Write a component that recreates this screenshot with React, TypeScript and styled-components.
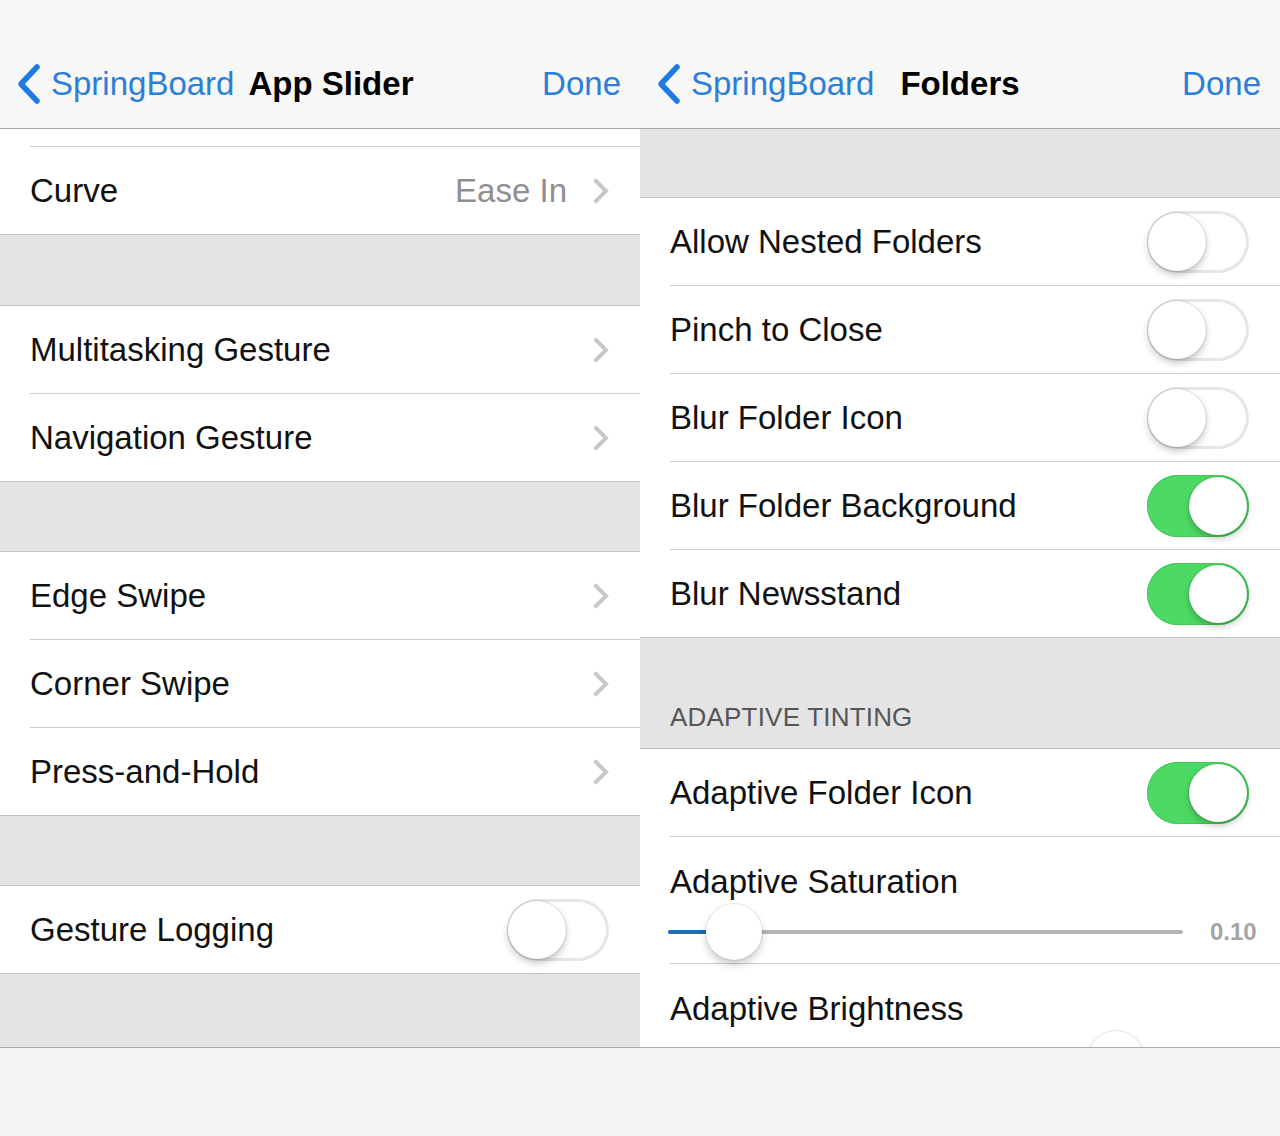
import React from "react";
import styled, { createGlobalStyle } from "styled-components";

const GlobalStyle = createGlobalStyle`
  html, body { margin: 0; padding: 0; background: #f4f4f4; }
  body { font-family: "Liberation Sans", Arial, sans-serif; -webkit-font-smoothing: antialiased; }
  * { box-sizing: border-box; }
`;

const Page = styled.div`
  display: flex;
  width: 1280px;
  height: 1136px;
  overflow: hidden;
`;

const Screen = styled.div`
  display: flex;
  flex-direction: column;
  width: 640px;
  height: 1136px;
`;

const NavBar = styled.header`
  height: 129px;
  padding-top: 40px;
  background: #f7f7f7;
  border-bottom: 1px solid #a9a9a9;
  display: grid;
  grid-template-columns: 1fr auto 1fr;
  align-items: center;
`;

const BackButton = styled.div`
  display: flex;
  align-items: center;
  gap: 9px;
  padding-left: 16px;
  color: #2c7fd4;
  font-size: 33px;
  height: 88px;
`;

const Title = styled.div`
  font-size: 33px;
  font-weight: 700;
  color: #000;
  padding: 0 14px;
`;

const DoneButton = styled.div`
  justify-self: end;
  padding-right: 19px;
  color: #2c7fd4;
  font-size: 33px;
`;

const Content = styled.main`
  flex: 1;
  overflow: hidden;
  background: #e4e4e4;
  display: flex;
  flex-direction: column;
`;

const Gap = styled.div<{ $h: number }>`
  height: ${(p) => p.$h}px;
  flex-shrink: 0;
`;

const HeaderGap = styled.div`
  height: 110px;
  flex-shrink: 0;
  display: flex;
  align-items: flex-end;
  padding: 0 30px 15px;
  font-size: 26px;
  color: #565656;
  letter-spacing: 0.2px;
`;

const Group = styled.section<{ $noTop?: boolean }>`
  background: #fff;
  border-top: ${(p) => (p.$noTop ? "none" : "1px solid #c4c4c4")};
  border-bottom: 1px solid #c4c4c4;
  flex-shrink: 0;
`;

const Row = styled.div<{ $h?: number }>`
  height: ${(p) => p.$h ?? 87}px;
  margin-left: 30px;
  padding-right: 31px;
  display: flex;
  align-items: center;
  box-sizing: content-box;
  & + & {
    border-top: 1px solid #cbcbcb;
  }
`;

const StackRow = styled(Row)`
  flex-direction: column;
  align-items: stretch;
  justify-content: flex-start;
  padding-right: 24px;
`;

const Label = styled.span`
  flex: 1;
  font-size: 33px;
  color: #111;
  white-space: nowrap;
`;

const StackLabel = styled(Label)`
  flex: none;
  margin-top: 26px;
  line-height: 38px;
`;

const Value = styled.span`
  font-size: 33px;
  color: #8e8e93;
  margin-right: 26px;
`;

const Chevron = styled.svg`
  width: 16px;
  height: 26px;
  flex-shrink: 0;
`;

const SwitchTrack = styled.div<{ $on: boolean }>`
  position: relative;
  width: 102px;
  height: 62px;
  border-radius: 31px;
  flex-shrink: 0;
  background: ${(p) => (p.$on ? "#4cd964" : "#fff")};
  box-shadow: ${(p) =>
    p.$on ? "inset 0 0 0 1px #45c85a" : "inset 0 0 0 3px #e6e6e6"};
`;

const SwitchKnob = styled.div<{ $on: boolean }>`
  position: absolute;
  top: 2px;
  ${(p) => (p.$on ? "right: 2px;" : "left: 1px;")}
  width: 58px;
  height: 58px;
  border-radius: 50%;
  background: #fff;
  box-shadow: 0 0 0 1px rgba(0, 0, 0, 0.1), 0 4px 7px rgba(0, 0, 0, 0.22);
`;

const SliderLine = styled.div`
  display: flex;
  align-items: center;
  height: 56px;
  margin-top: 3px;
  margin-left: -2px;
  gap: 27px;
`;

const SliderTrack = styled.div`
  position: relative;
  flex: 1;
  height: 4px;
  border-radius: 2px;
  background: #b4b4b4;
`;

const SliderFill = styled.div`
  height: 100%;
  border-radius: 2px;
  background: #1f6db5;
`;

const SliderThumb = styled.div`
  position: absolute;
  top: -26px;
  width: 56px;
  height: 56px;
  margin-left: -28px;
  border-radius: 50%;
  background: #fff;
  box-shadow: 0 0 0 1px rgba(0, 0, 0, 0.08), 0 5px 8px rgba(0, 0, 0, 0.2);
`;

const SliderValue = styled.span`
  font-size: 24px;
  font-weight: 700;
  color: #a5a5a5;
  width: 46px;
  text-align: right;
`;

const BottomBar = styled.footer`
  height: 89px;
  flex-shrink: 0;
  background: #f4f4f4;
  border-top: 1px solid #ababab;
`;

const BackChevron = () => (
  <svg width="26" height="42" viewBox="0 0 26 42">
    <polyline
      points="21,4 5,21 21,38"
      fill="none"
      stroke="#1f7ae2"
      strokeWidth="5.5"
      strokeLinecap="round"
      strokeLinejoin="round"
    />
  </svg>
);

const Disclosure = () => (
  <Chevron viewBox="0 0 16 26">
    <polyline
      points="3,3 13,13 3,23"
      fill="none"
      stroke="#c7c7cc"
      strokeWidth="4"
      strokeLinecap="square"
    />
  </Chevron>
);

const Switch = ({ on }: { on: boolean }) => (
  <SwitchTrack $on={on}>
    <SwitchKnob $on={on} />
  </SwitchTrack>
);

const Slider = ({ pos, value }: { pos: number; value?: string }) => (
  <SliderLine>
    <SliderTrack>
      <SliderFill style={{ width: `${pos}px` }} />
      <SliderThumb style={{ left: `${pos}px` }} />
    </SliderTrack>
    <SliderValue>{value ?? ""}</SliderValue>
  </SliderLine>
);

const Nav = ({ title }: { title: string }) => (
  <NavBar>
    <BackButton>
      <BackChevron />
      <span>SpringBoard</span>
    </BackButton>
    <Title>{title}</Title>
    <DoneButton>Done</DoneButton>
  </NavBar>
);

const LinkRow = ({ label, value }: { label: string; value?: string }) => (
  <Row>
    <Label>{label}</Label>
    {value && <Value>{value}</Value>}
    <Disclosure />
  </Row>
);

const SwitchRow = ({ label, on }: { label: string; on: boolean }) => (
  <Row>
    <Label>{label}</Label>
    <Switch on={on} />
  </Row>
);

export default function App() {
  return (
    <>
      <GlobalStyle />
      <Page>
        <Screen>
          <Nav title="App Slider" />
          <Content>
            <Group $noTop>
              <Row $h={17} />
              <LinkRow label="Curve" value="Ease In" />
            </Group>
            <Gap $h={70} />
            <Group>
              <LinkRow label="Multitasking Gesture" />
              <LinkRow label="Navigation Gesture" />
            </Group>
            <Gap $h={69} />
            <Group>
              <LinkRow label="Edge Swipe" />
              <LinkRow label="Corner Swipe" />
              <LinkRow label="Press-and-Hold" />
            </Group>
            <Gap $h={69} />
            <Group>
              <SwitchRow label="Gesture Logging" on={false} />
            </Group>
          </Content>
          <BottomBar />
        </Screen>
        <Screen>
          <Nav title="Folders" />
          <Content>
            <Gap $h={68} />
            <Group>
              <SwitchRow label="Allow Nested Folders" on={false} />
              <SwitchRow label="Pinch to Close" on={false} />
              <SwitchRow label="Blur Folder Icon" on={false} />
              <SwitchRow label="Blur Folder Background" on={true} />
              <SwitchRow label="Blur Newsstand" on={true} />
            </Group>
            <HeaderGap>ADAPTIVE TINTING</HeaderGap>
            <Group>
              <SwitchRow label="Adaptive Folder Icon" on={true} />
              <StackRow $h={126}>
                <StackLabel>Adaptive Saturation</StackLabel>
                <Slider pos={66} value="0.10" />
              </StackRow>
              <StackRow $h={126}>
                <StackLabel>Adaptive Brightness</StackLabel>
                <Slider pos={448} />
              </StackRow>
            </Group>
          </Content>
          <BottomBar />
        </Screen>
      </Page>
    </>
  );
}
